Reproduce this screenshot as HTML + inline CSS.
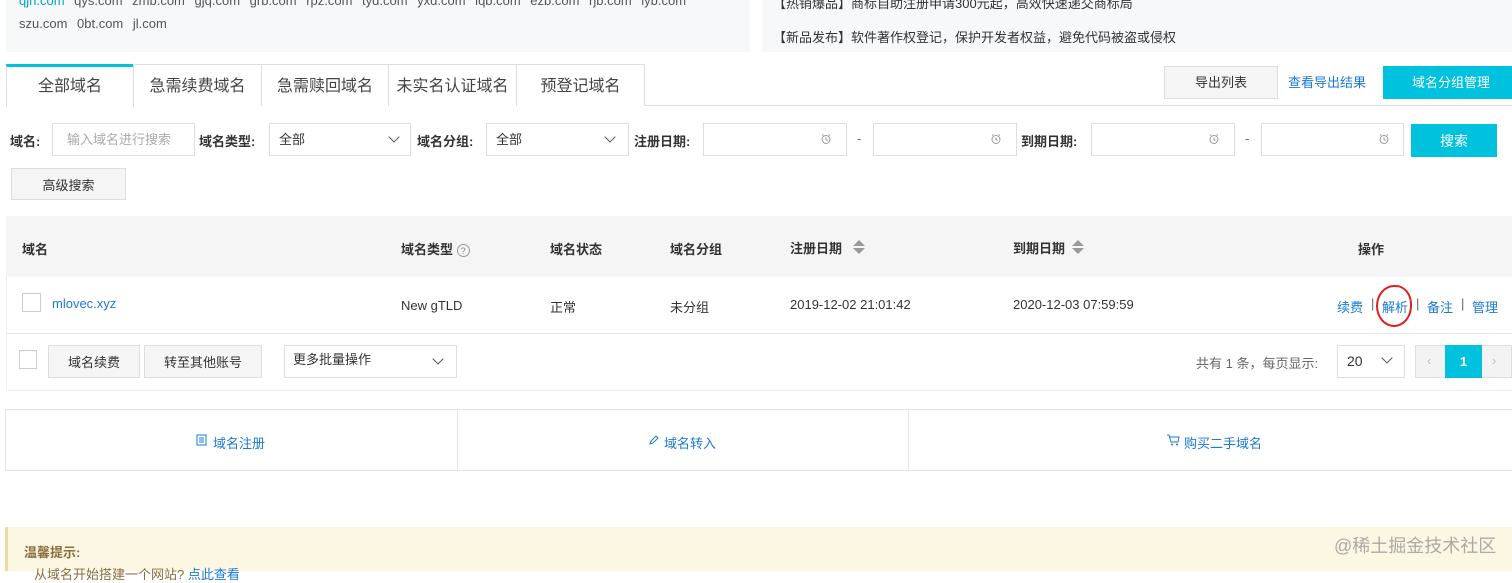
<!DOCTYPE html><html><head><meta charset="utf-8"><style>
*{box-sizing:border-box;margin:0;padding:0}
body{width:1512px;height:571px;overflow:hidden;background:#fff;font-family:"Liberation Sans","Noto Sans CJK SC",sans-serif;font-size:13px;color:#333;position:relative}
.a{position:absolute}
.box{position:absolute;border:1px solid #ddd;background:#fff}
.btn{position:absolute;border:1px solid #ddd;background:#f5f5f5;text-align:center;color:#333}
.blue{color:#1a79d6}
.tab{position:absolute;top:64px;height:42px;border:1px solid #ddd;border-bottom:none;font-size:16px;color:#444;text-align:center;line-height:44px;background:#fff}
.lab{position:absolute;font-weight:bold;font-size:13px;color:#333}
.chev{position:absolute;width:8px;height:8px;border-right:1.5px solid #555;border-bottom:1.5px solid #555;transform:rotate(45deg)}
.clk{position:absolute;width:12px;height:12px}
</style></head><body>
<div class="a" style="left:6px;top:0;width:744px;height:52px;background:#f7f8fa"></div>
<div class="a" style="left:19px;top:-7px;font-size:13px;color:#555;white-space:nowrap;word-spacing:6px"><span style="color:#00a2ca">qjn.com</span> qys.com zmb.com gjq.com grb.com rpz.com tyd.com yxd.com lqb.com ezb.com rjb.com lyb.com</div>
<div class="a" style="left:19px;top:16px;color:#555;word-spacing:6px">szu.com 0bt.com jl.com</div>
<div class="a" style="left:762px;top:0;width:750px;height:52px;background:#f7f8fa"></div>
<div class="a" style="left:773px;top:-7px;color:#333;white-space:nowrap">【热销爆品】商标自助注册申请300元起，高效快速递交商标局</div>
<div class="a" style="left:773px;top:27px;color:#333;white-space:nowrap">【新品发布】软件著作权登记，保护开发者权益，避免代码被盗或侵权</div>

<div class="a" style="left:6px;top:105px;width:1506px;height:1px;background:#ddd"></div>
<div class="tab" style="left:6px;width:128px;border-top:3px solid #00c1de;line-height:40px;height:43px">全部域名</div>
<div class="tab" style="left:133px;width:129px">急需续费域名</div>
<div class="tab" style="left:261px;width:128px">急需赎回域名</div>
<div class="tab" style="left:388px;width:129px">未实名认证域名</div>
<div class="tab" style="left:516px;width:129px">预登记域名</div>
<div class="btn" style="left:1164px;top:66px;width:114px;height:33px;line-height:31px">导出列表</div>
<div class="a blue" style="left:1288px;top:72px">查看导出结果</div>
<div class="a" style="left:1383px;top:66px;width:129px;height:33px;background:#00c1de;color:#fff;line-height:33px;padding-left:29px">域名分组管理</div>

<div class="lab" style="left:10px;top:131px">域名:</div>
<div class="box" style="left:52px;top:123px;width:143px;height:33px;color:#aaa;line-height:31px;padding-left:14px">输入域名进行搜索</div>
<div class="lab" style="left:199px;top:131px">域名类型:</div>
<div class="box" style="left:269px;top:123px;width:142px;height:33px;line-height:31px;padding-left:9px">全部</div><div class="chev" style="left:390px;top:133px"></div>
<div class="lab" style="left:417px;top:131px">域名分组:</div>
<div class="box" style="left:486px;top:123px;width:143px;height:33px;line-height:31px;padding-left:9px">全部</div><div class="chev" style="left:606px;top:133px"></div>
<div class="lab" style="left:634px;top:131px">注册日期:</div>
<div class="box" style="left:703px;top:123px;width:144px;height:33px"></div>
<div class="a" style="left:857px;top:131px;color:#666">-</div>
<div class="box" style="left:873px;top:123px;width:144px;height:33px"></div>
<div class="lab" style="left:1021px;top:131px">到期日期:</div>
<div class="box" style="left:1091px;top:123px;width:144px;height:33px"></div>
<div class="a" style="left:1245px;top:131px;color:#666">-</div>
<div class="box" style="left:1261px;top:123px;width:143px;height:33px"></div>
<svg class="clk" style="left:820px;top:133px" viewBox="0 0 12 12"><circle cx="6" cy="6.5" r="4" fill="none" stroke="#999"/><path d="M6 4.5V6.8L7.5 7.5M2 2.5L3.5 1.5M10 2.5L8.5 1.5" stroke="#999" fill="none"/></svg>
<svg class="clk" style="left:990px;top:133px" viewBox="0 0 12 12"><circle cx="6" cy="6.5" r="4" fill="none" stroke="#999"/><path d="M6 4.5V6.8L7.5 7.5M2 2.5L3.5 1.5M10 2.5L8.5 1.5" stroke="#999" fill="none"/></svg>
<svg class="clk" style="left:1208px;top:133px" viewBox="0 0 12 12"><circle cx="6" cy="6.5" r="4" fill="none" stroke="#999"/><path d="M6 4.5V6.8L7.5 7.5M2 2.5L3.5 1.5M10 2.5L8.5 1.5" stroke="#999" fill="none"/></svg>
<svg class="clk" style="left:1378px;top:133px" viewBox="0 0 12 12"><circle cx="6" cy="6.5" r="4" fill="none" stroke="#999"/><path d="M6 4.5V6.8L7.5 7.5M2 2.5L3.5 1.5M10 2.5L8.5 1.5" stroke="#999" fill="none"/></svg>
<div class="a" style="left:1411px;top:124px;width:86px;height:33px;background:#00c1de;color:#fff;text-align:center;line-height:34px;font-size:14px">搜索</div>
<div class="btn" style="left:11px;top:168px;width:115px;height:32px;line-height:34px">高级搜索</div>

<div class="a" style="left:6px;top:216px;width:1506px;height:175px;border:1px solid #eee;border-right:none"></div>
<div class="a" style="left:6px;top:216px;width:1506px;height:61px;background:#f5f5f6"></div>
<div class="a" style="left:6px;top:333px;width:1506px;height:1px;background:#e8e8e8"></div>
<div class="lab" style="left:22px;top:239px">域名</div>
<div class="lab" style="left:401px;top:239px">域名类型 <span style="font-weight:normal;color:#888;border:1px solid #999;border-radius:50%;font-size:9px;display:inline-block;width:13px;height:13px;line-height:12px;text-align:center">?</span></div>
<div class="lab" style="left:550px;top:239px">域名状态</div>
<div class="lab" style="left:670px;top:239px">域名分组</div>
<div class="lab" style="left:790px;top:238px">注册日期</div>
<svg class="a" style="left:852px;top:239px" width="14" height="16" viewBox="0 0 14 16"><path d="M7 1L13 7H1Z M7 15L13 9H1Z" fill="#999"/></svg>
<div class="lab" style="left:1013px;top:238px">到期日期</div>
<svg class="a" style="left:1071px;top:239px" width="14" height="16" viewBox="0 0 14 16"><path d="M7 1L13 7H1Z M7 15L13 9H1Z" fill="#999"/></svg>
<div class="lab" style="left:1358px;top:239px">操作</div>

<div class="a" style="left:22px;top:293px;width:19px;height:19px;border:1px solid #ccc"></div>
<div class="a blue" style="left:52px;top:296px">mlovec.xyz</div>
<div class="a" style="left:401px;top:298px">New gTLD</div>
<div class="a" style="left:550px;top:297px">正常</div>
<div class="a" style="left:670px;top:297px">未分组</div>
<div class="a" style="left:790px;top:297px">2019-12-02 21:01:42</div>
<div class="a" style="left:1013px;top:297px">2020-12-03 07:59:59</div>
<div class="a blue" style="left:1337px;top:297px">续费</div>
<div class="a" style="left:1371px;top:296px;color:#666">|</div>
<div class="a blue" style="left:1382px;top:297px">解析</div>
<div class="a" style="left:1416px;top:296px;color:#666">|</div>
<div class="a blue" style="left:1427px;top:297px">备注</div>
<div class="a" style="left:1461px;top:296px;color:#666">|</div>
<div class="a blue" style="left:1472px;top:297px">管理</div>
<div class="a" style="left:1376px;top:285px;width:36px;height:42px;border:2px solid #e02020;border-radius:50% 45% 50% 50%"></div>

<div class="a" style="left:19px;top:350px;width:18px;height:19px;border:1px solid #ccc"></div>
<div class="btn" style="left:48px;top:345px;width:92px;height:33px;line-height:34px">域名续费</div>
<div class="btn" style="left:144px;top:345px;width:118px;height:33px;line-height:34px">转至其他账号</div>
<div class="box" style="left:284px;top:345px;width:173px;height:33px;line-height:28px;padding-left:8px">更多批量操作</div><div class="chev" style="left:434px;top:355px"></div>
<div class="a" style="left:1196px;top:353px;color:#666">共有 1 条，每页显示:</div>
<div class="box" style="left:1337px;top:345px;width:68px;height:33px;line-height:31px;padding-left:9px;font-size:14px">20</div><div class="chev" style="left:1383px;top:354px"></div>
<div class="a" style="left:1415px;top:345px;width:97px;height:33px;background:#f3f3f3;border:1px solid #ddd"></div>
<div class="a" style="left:1427px;top:353px;color:#bbb">‹</div>
<div class="a" style="left:1445px;top:345px;width:37px;height:33px;background:#00c1de;color:#fff;text-align:center;line-height:33px;font-weight:bold">1</div>
<div class="a" style="left:1492px;top:353px;color:#bbb">›</div>

<div class="a" style="left:5px;top:409px;width:1507px;height:62px;border:1px solid #e2e2e2;border-right:none"></div>
<div class="a" style="left:457px;top:409px;width:1px;height:62px;background:#e2e2e2"></div>
<div class="a" style="left:908px;top:409px;width:1px;height:62px;background:#e2e2e2"></div>
<svg class="a" style="left:196px;top:434px" width="11" height="12" viewBox="0 0 11 12"><rect x="1" y="1" width="9" height="10" fill="none" stroke="#1a79d6"/><path d="M3 4H8M3 6H8M3 8H8" stroke="#1a79d6"/></svg>
<div class="a blue" style="left:213px;top:433px">域名注册</div>
<svg class="a" style="left:648px;top:434px" width="11" height="12" viewBox="0 0 11 12"><path d="M2 10L3 7L8 2L10 4L5 9Z" fill="none" stroke="#1a79d6"/></svg>
<div class="a blue" style="left:664px;top:433px">域名转入</div>
<svg class="a" style="left:1166px;top:434px" width="14" height="12" viewBox="0 0 14 12"><path d="M1 1H3L5 8H12L13 3H4" fill="none" stroke="#1a79d6"/><circle cx="6" cy="10.5" r="1" fill="#1a79d6"/><circle cx="11" cy="10.5" r="1" fill="#1a79d6"/></svg>
<div class="a blue" style="left:1184px;top:433px">购买二手域名</div>

<div class="a" style="left:5px;top:527px;width:1507px;height:44px;background:#fcf7e2;border-left:3px solid #f0d9a0"></div>
<div class="a" style="left:24px;top:542px;color:#8a6d3b;font-weight:bold">温馨提示:</div>
<div class="a" style="left:34px;top:564px;color:#8a6d3b">从域名开始搭建一个网站? <span class="blue">点此查看</span></div>
<div class="a" style="left:1334px;top:532px;color:rgba(150,150,150,.8);font-size:18px">@稀土掘金技术社区</div>
</body></html>
